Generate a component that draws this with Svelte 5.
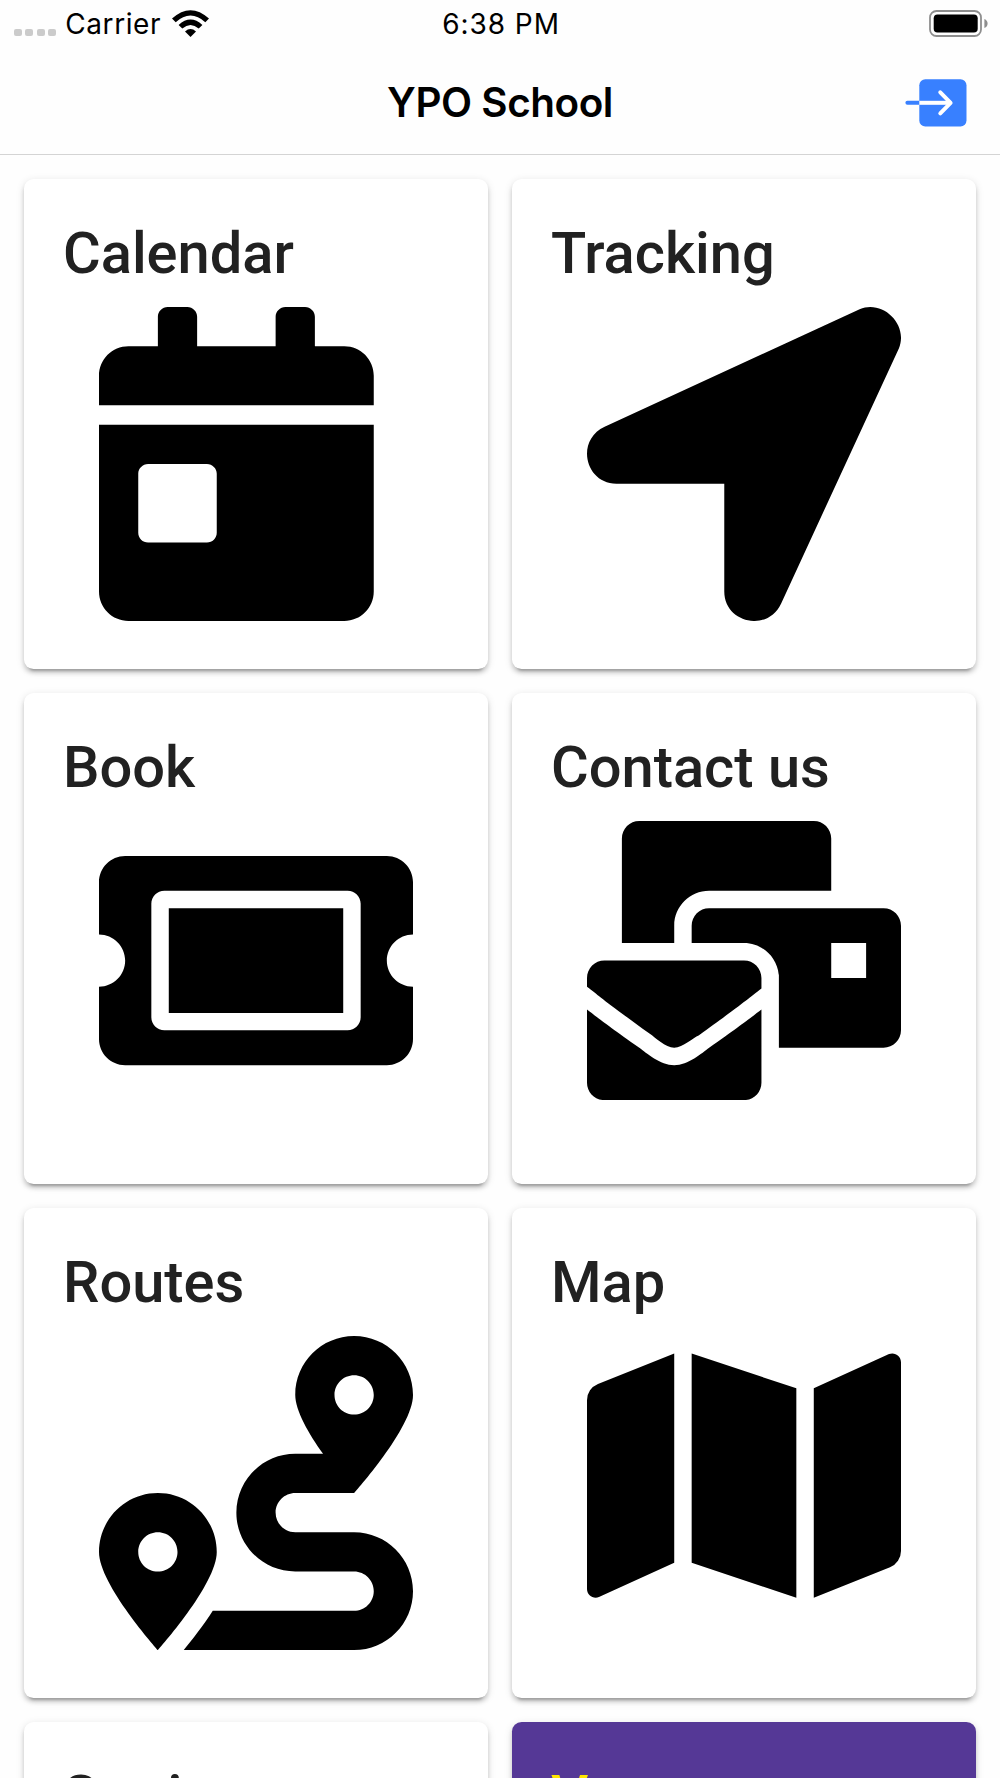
<script lang="ts">
  interface Tile {
    id: string;
    title: string;
    viewBox?: string;
    path?: string;
    accent?: boolean;
  }

  const carrier = 'Carrier';
  const time = '6:38 PM';

  const tiles: Tile[] = [
    {
      id: 'calendar',
      title: 'Calendar',
      viewBox: '0 0 512 512',
      path: 'M0 464c0 26.5 21.5 48 48 48h352c26.5 0 48-21.5 48-48V192H0v272zm64-192c0-8.8 7.2-16 16-16h96c8.8 0 16 7.2 16 16v96c0 8.8-7.2 16-16 16H80c-8.8 0-16-7.2-16-16v-96zM400 64h-48V16c0-8.8-7.2-16-16-16h-32c-8.8 0-16 7.2-16 16v48H160V16c0-8.8-7.2-16-16-16h-32c-8.8 0-16 7.2-16 16v48H48C21.5 64 0 85.5 0 112v48h448v-48c0-26.5-21.5-48-48-48z',
    },
    {
      id: 'tracking',
      title: 'Tracking',
      viewBox: '0 0 512 512',
      path: 'M444.52 3.52L28.74 195.42c-47.97 22.39-31.98 92.75 19.19 92.75h175.91v175.91c0 51.17 70.36 67.17 92.75 19.19l191.9-415.78c15.99-38.39-25.59-79.97-63.97-63.97z',
    },
    {
      id: 'book',
      title: 'Book',
      viewBox: '0 0 576 512',
      path: 'M128 160h320v192H128V160zm400 96c0 26.51 21.49 48 48 48v96c0 26.51-21.49 48-48 48H48c-26.51 0-48-21.49-48-48v-96c26.51 0 48-21.49 48-48s-21.49-48-48-48v-96c0-26.51 21.49-48 48-48h480c26.51 0 48 21.49 48 48v96c-26.51 0-48 21.49-48 48zm-48-104c0-13.255-10.745-24-24-24H120c-13.255 0-24 10.745-24 24v208c0 13.255 10.745 24 24 24h336c13.255 0 24-10.745 24-24V152z',
    },
    {
      id: 'contact',
      title: 'Contact us',
      viewBox: '0 0 576 512',
      path: 'M160 448c-25.6 0-51.2-22.4-64-32-64-44.8-83.2-60.8-96-70.4V480c0 17.67 14.33 32 32 32h256c17.67 0 32-14.33 32-32V345.6c-12.8 9.6-32 25.6-96 70.4-12.8 9.6-38.4 32-64 32zm128-192H32c-17.67 0-32 14.33-32 32v16c25.6 19.2 22.4 19.2 115.2 86.4 9.6 6.4 28.8 25.6 44.8 25.6s35.2-19.2 44.8-22.4c92.8-67.2 89.6-67.2 115.2-86.4V288c0-17.67-14.33-32-32-32zm256-96H224c-17.67 0-32 14.33-32 32v32h96c33.21 0 60.59 25.42 63.71 57.82l.29-.22V416h192c17.67 0 32-14.33 32-32V192c0-17.67-14.33-32-32-32zm-32 128h-64v-64h64v64zm-352-96c0-35.29 28.71-64 64-64h224V32c0-17.67-14.33-32-32-32H96C78.33 0 64 14.33 64 32v192h96v-32z',
    },
    {
      id: 'routes',
      title: 'Routes',
      viewBox: '0 0 512 512',
      path: 'M416 320h-96c-17.6 0-32-14.4-32-32s14.4-32 32-32h96s96-107 96-160-43-96-96-96-96 43-96 96c0 25.5 22.2 63.4 45.3 96H320c-52.9 0-96 43.1-96 96s43.1 96 96 96h96c17.6 0 32 14.4 32 32s-14.4 32-32 32H185.5c-16 24.8-33.8 47.7-47.3 64H416c52.9 0 96-43.1 96-96s-43.1-96-96-96zm0-256c17.7 0 32 14.3 32 32s-14.3 32-32 32-32-14.3-32-32 14.3-32 32-32zM96 256c-53 0-96 43-96 96s96 160 96 160 96-107 96-160-43-96-96-96zm0 128c-17.7 0-32-14.3-32-32s14.3-32 32-32 32 14.3 32 32-14.3 32-32 32z',
    },
    {
      id: 'map',
      title: 'Map',
      viewBox: '0 0 576 512',
      path: 'M0 117.66v346.32c0 11.32 11.43 19.06 21.94 14.86L160 416V32L20.12 87.95A32.006 32.006 0 0 0 0 117.66zM192 416l192 64V96L192 32v384zM554.06 33.16L416 96v384l139.88-55.95A31.996 31.996 0 0 0 576 394.34V48.02c0-11.32-11.43-19.06-21.94-14.86z',
    },
    { id: 'settings', title: 'Settings' },
    { id: 'more', title: 'V', accent: true },
  ];
</script>

<div class="screen">
  <div class="status">
    <div class="side">
      <span class="signal"><i></i><i></i><i></i><i></i></span>
      <span class="carrier">{carrier}</span>
      <svg class="wifi" viewBox="0 0 37 27" aria-hidden="true">
        <path d="M0 8.6Q18.5-8.2 37 8.6L33.3 12.2Q18.5-1.2 3.7 12.2Z" />
        <path d="M6.6 15Q18.5 4.2 30.4 15L26.7 18.6Q18.5 11.6 10.3 18.6Z" />
        <path d="M13 21.4Q18.5 16.8 24 21.4L18.5 27Z" />
      </svg>
    </div>
    <span class="time">{time}</span>
    <div class="side right">
      <svg class="battery" viewBox="0 0 59 27" aria-hidden="true">
        <rect x="1" y="1" width="51" height="25" rx="6.5" fill="none" stroke="#8e8e8e" stroke-width="1.8" />
        <rect x="4.7" y="4.5" width="44" height="18" rx="3.8" />
        <path d="M55.4 9Q58.6 10.5 58.6 13.5T55.4 18Z" fill="#8e8e8e" />
      </svg>
    </div>
  </div>

  <header>
    <h1>YPO School</h1>
    <button type="button" class="logout" aria-label="Log out">
      <svg viewBox="0 0 62 48" fill="none" stroke-linecap="round" stroke-linejoin="round">
        <rect x="14.3" y="0.3" width="47.2" height="47.2" rx="6" fill="#3880ff" />
        <path d="M2.4 23.8H14" stroke="#3880ff" stroke-width="4" />
        <path d="M14.3 23.8H46" stroke="#fff" stroke-width="4" stroke-linecap="butt" />
        <path d="M35.3 13.3L45.6 23.8L35.3 34.3" stroke="#fff" stroke-width="4" />
      </svg>
    </button>
  </header>

  <main>
    {#each tiles as tile (tile.id)}
      <section class="card" class:accent={tile.accent}>
        <h2>{tile.title}</h2>
        {#if tile.path}
          <svg class="icon" viewBox={tile.viewBox} aria-hidden="true">
            <path d={tile.path} />
          </svg>
        {/if}
      </section>
    {/each}
  </main>
</div>

<style>
  :global(body) {
    background: #fff;
  }

  .screen {
    width: 1000px;
    height: 1778px;
    overflow: hidden;
    background: #fefefe;
    color: #000;
    font-family: Inter, "Liberation Sans", sans-serif;
  }

  .status {
    display: flex;
    align-items: center;
    justify-content: space-between;
    height: 47px;
    padding: 0 12px 0 14px;
    font-size: 28px;
    line-height: 47px;
  }

  .side {
    display: flex;
    flex: 1;
    align-items: center;
  }

  .right {
    justify-content: flex-end;
  }

  .signal {
    display: flex;
    gap: 3.4px;
    margin: 18px 9px 0 0;
  }

  .signal i {
    width: 8px;
    height: 7.5px;
    border-radius: 2px;
    background: #cbcbcb;
  }

  .carrier {
    margin-right: 11px;
    padding-top: 1px;
    letter-spacing: 0.6px;
  }

  .time {
    padding-top: 1px;
    letter-spacing: 0.95px;
  }

  .wifi {
    width: 37px;
    height: 27px;
  }

  .battery {
    width: 59px;
    height: 27px;
  }

  header {
    display: grid;
    grid-template-columns: 1fr auto 1fr;
    align-items: center;
    box-sizing: border-box;
    height: 108px;
    padding: 4px 33px 0;
    border-bottom: 1px solid #d4d4d4;
  }

  h1 {
    grid-column: 2;
    margin: 0;
    font-size: 40.4px;
    font-weight: 600;
    line-height: 48px;
    letter-spacing: -0.45px;
  }

  .logout {
    justify-self: end;
    display: flex;
    padding: 0;
    border: none;
    background: none;
  }

  .logout svg {
    width: 62px;
    height: 48px;
  }

  main {
    display: grid;
    grid-template-columns: 1fr 1fr;
    grid-auto-rows: 490.35px;
    gap: 24px;
    padding: 24px;
  }

  .card {
    box-sizing: border-box;
    padding: 39px;
    border-radius: 9.6px;
    background: #fff;
    box-shadow:
      0 7px 2.4px -5px rgba(0, 0, 0, 0.2),
      0 4px 4px rgba(0, 0, 0, 0.16),
      0 2px 8px rgba(0, 0, 0, 0.12);
  }

  h2 {
    margin: 0;
    color: #212121;
    font-family: Roboto, sans-serif;
    font-size: 57.8px;
    font-weight: 500;
    line-height: 70px;
  }

  .icon {
    display: block;
    width: 314px;
    margin: 19px 0 0 36px;
  }

  .accent {
    background: #553896;
  }

  .accent h2 {
    color: #ffe600;
  }
</style>
